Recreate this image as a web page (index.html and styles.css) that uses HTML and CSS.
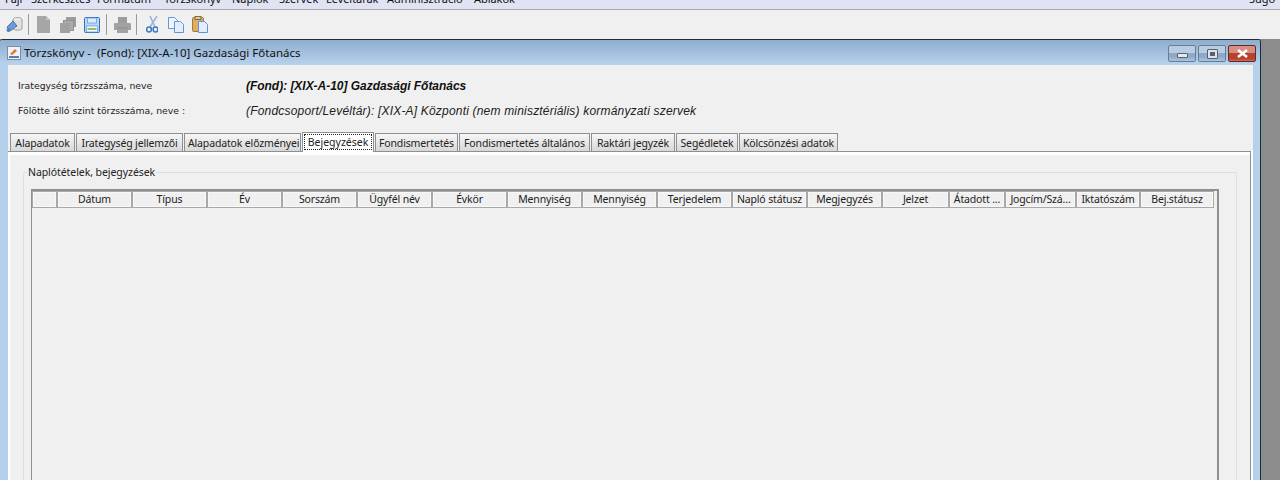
FILE: index.html
```html
<!DOCTYPE html>
<html lang="hu">
<head>
<meta charset="utf-8">
<title>Törzskönyv</title>
<link rel="stylesheet" href="styles.css">
</head>
<body>
<nav class="menubar">
  <span class="m m1">Fájl</span><span class="m m2">Szerkesztés</span><span class="m m3">Formátum</span><span class="m m4">Törzskönyv</span><span class="m m5">Naplók</span><span class="m m6">Szervek</span><span class="m m7">Levéltárak</span><span class="m m8">Adminisztráció</span><span class="m m9">Ablakok</span><span class="m help">Súgó</span>
</nav>
<div class="toolbar">
  <svg class="ic i-search" viewBox="0 0 17 17"><ellipse cx="11.5" cy="4" rx="4.5" ry="2.5" fill="#ececec" stroke="#a0a0a0"/><path d="M7 4v9c0 1.5 9 1.5 9 0V4" fill="#e2e2e2" stroke="#a0a0a0"/><path d="M1 11l6-6 4 5-7 5z" fill="#6f9ad6" stroke="#4473b5"/><circle cx="2.5" cy="14" r="2" fill="#4f80c2"/></svg>
  <i class="sep s1"></i>
  <svg class="ic i-doc" viewBox="0 0 13 17"><path d="M0 0h9l4 4v13H0z" fill="#a6a6a6"/><path d="M9 0l4 4H9z" fill="#c2c2c2"/></svg>
  <svg class="ic i-docs" viewBox="0 0 16 16"><rect x="6" y="0" width="10" height="10" fill="#9c9c9c"/><rect x="3.5" y="3.5" width="10" height="10" fill="#aaa" stroke="#929292"/><rect x="0" y="6" width="10" height="10" fill="#a0a0a0"/></svg>
  <svg class="ic i-save" viewBox="0 0 16 16"><rect x=".5" y=".5" width="15" height="15" rx="1" fill="#bcd6f5" stroke="#2f6fc4"/><rect x="3.5" y="1" width="9" height="5" fill="#dcebfb" stroke="#5f93d6" stroke-width=".7"/><rect x="2.5" y="9" width="11" height="6" fill="#f6f9fd" stroke="#5f93d6" stroke-width=".7"/><rect x="3.5" y="11" width="9" height="2" fill="#8fc070"/></svg>
  <i class="sep s2"></i>
  <svg class="ic i-print" viewBox="0 0 17 16"><path d="M4 0h9v6H4z" fill="#9c9c9c"/><path d="M1 6h15a1 1 0 0 1 1 1v6h-3v3H3v-3H0V7a1 1 0 0 1 1-1z" fill="#a2a2a2"/><path d="M3 11h11" stroke="#8a8a8a"/></svg>
  <i class="sep s3"></i>
  <svg class="ic i-cut" viewBox="0 0 12 17"><path d="M11 0L4 11M4 0l5 11" fill="none" stroke="#9db6d6" stroke-width="1.6"/><circle cx="3" cy="13.5" r="2.4" fill="none" stroke="#3f78c0" stroke-width="1.5"/><circle cx="9.5" cy="13.5" r="2.4" fill="none" stroke="#3f78c0" stroke-width="1.5"/></svg>
  <svg class="ic i-copy" viewBox="0 0 16 16"><path d="M.5.5h6l3 3v8h-9z" fill="#eef5fd" stroke="#6496d6"/><path d="M6.5 4.5h6l3 3v8h-9z" fill="#e2eefb" stroke="#6496d6"/></svg>
  <svg class="ic i-paste" viewBox="0 0 16 17"><rect x=".5" y="1.5" width="11" height="14" rx="1" fill="#dcae66" stroke="#a47a38"/><rect x="3" y=".5" width="6" height="3" fill="#c8c8c8" stroke="#8a6a30"/><path d="M6.5 5.5h6l3 3v8h-9z" fill="#e2eefb" stroke="#6496d6"/></svg>
</div>
<div class="desktop">
  <section class="window">
    <header class="titlebar">
      <svg class="win-icon" viewBox="0 0 14 14"><rect x=".5" y=".5" width="13" height="13" fill="#eef2f8" stroke="#7d8ca0"/><path d="M3 8l5-5 2 2-5 4z" fill="#e2762a"/><path d="M2 10h10v2H2z" fill="#5d7ba8"/></svg>
      <span class="win-title">Törzskönyv -&nbsp; (Fond): [XIX-A-10] Gazdasági Főtanács</span>
      <div class="win-btns">
        <span class="wb"><i class="g-min"></i></span>
        <span class="wb"><i class="g-max"></i></span>
        <span class="wb close"><svg class="g-x" viewBox="0 0 11 9"><path d="M1 1l9 7M10 1L1 8" stroke="#fff" stroke-width="2.6"/></svg></span>
      </div>
    </header>
    <div class="content">
      <div class="info r1"><span class="lbl">Irategység törzsszáma, neve</span><strong class="val">(Fond): [XIX-A-10] Gazdasági Főtanács</strong></div>
      <div class="info r2"><span class="lbl">Fölötte álló szint törzsszáma, neve :</span><em class="val2">(Fondcsoport/Levéltár): [XIX-A] Központi (nem minisztériális) kormányzati szervek</em></div>
      <div class="tabs">
        <span class="tab t1">Alapadatok</span>
        <span class="tab t2">Irategység jellemzői</span>
        <span class="tab t3">Alapadatok előzményei</span>
        <span class="tab t4 active"><b class="focus">Bejegyzések</b></span>
        <span class="tab t5">Fondismertetés</span>
        <span class="tab t6">Fondismertetés általános</span>
        <span class="tab t7">Raktári jegyzék</span>
        <span class="tab t8">Segédletek</span>
        <span class="tab t9">Kölcsönzési adatok</span>
      </div>
      <div class="panel">
        <fieldset class="group">
          <legend>Naplótételek, bejegyzések</legend>
          <div class="table">
            <div class="thead">
              <span class="th w25"></span>
              <span class="th w75">Dátum</span>
              <span class="th w75">Típus</span>
              <span class="th w75">Év</span>
              <span class="th w75">Sorszám</span>
              <span class="th w75">Ügyfél név</span>
              <span class="th w75">Évkör</span>
              <span class="th w75">Mennyiség</span>
              <span class="th w75">Mennyiség</span>
              <span class="th w75">Terjedelem</span>
              <span class="th w75">Napló státusz</span>
              <span class="th w75">Megjegyzés</span>
              <span class="th w67">Jelzet</span>
              <span class="th w56">Átadott ...</span>
              <span class="th w71">Jogcím/Szá...</span>
              <span class="th w64">Iktatószám</span>
              <span class="th w74">Bej.státusz</span>
            </div>
          </div>
        </fieldset>
      </div>
    </div>
  </section>
</div>
</body>
</html>
```
FILE: styles.css
```css
* { box-sizing: border-box; }
html, body { margin: 0; height: 480px; overflow: hidden; }
body {
  display: flex;
  flex-direction: column;
  font-family: "Noto Sans", "DejaVu Sans", sans-serif;
  font-size: 10.5px;
  letter-spacing: -.15px;
  color: #111;
  background: #8c8c8c;
}

/* Menu bar (clipped by the top of the picture) */
.menubar {
  flex: none;
  display: flex;
  height: 10px;
  overflow: hidden;
  background: #dfe3f3;
  border-bottom: 1px solid #a8a8a8;
  align-items: flex-end;
  padding-bottom: 3px;
}
.m { flex: none; line-height: 14px; white-space: nowrap; letter-spacing: -.05px; font-size: 11px; }
.m1 { width: 26px; margin-left: 5px; }
.m2 { width: 66px; }
.m3 { width: 67px; }
.m4 { width: 68px; }
.m5 { width: 47px; }
.m6 { width: 47px; }
.m7 { width: 61px; }
.m8 { width: 87px; }
.m9 { width: 50px; }
.help { margin-left: auto; margin-right: 5px; }

/* Toolbar */
.toolbar {
  flex: none;
  display: flex;
  align-items: center;
  height: 29px;
  background: #f0f0f0;
  padding-left: 6px;
}
.ic { flex: none; display: block; }
.i-search { width: 17px; height: 17px; }
.sep { flex: none; width: 1px; height: 21px; background: #9a9a9a; }
.s1 { margin: 0 8px 0 5px; }
.i-doc { width: 13px; height: 17px; }
.i-docs { width: 16px; height: 16px; margin-left: 10px; }
.i-save { width: 16px; height: 16px; margin-left: 8px; }
.s2 { margin: 0 7px 0 6px; }
.i-print { width: 17px; height: 16px; }
.s3 { margin: 0 9px 0 5px; }
.i-cut { width: 12px; height: 17px; }
.i-copy { width: 16px; height: 16px; margin-left: 10px; }
.i-paste { width: 16px; height: 17px; margin-left: 8px; }

/* Window */
.desktop { flex: 1; min-height: 0; display: flex; }
.window {
  flex: none;
  width: 1261px;
  display: flex;
  flex-direction: column;
  background: #b5d0ea;
  border-top: 1px solid #262b30;
  border-right: 1px solid #10323c;
  border-top-right-radius: 3px;
  border-top-left-radius: 3px;
  overflow: hidden;
}
.titlebar {
  flex: none;
  display: flex;
  align-items: center;
  height: 25px;
  padding-left: 7px;
  background: linear-gradient(#8eaecf, #b7d2ec);
}
.win-icon { width: 14px; height: 14px; flex: none; margin-right: 3px; }
.win-title { font-size: 11.5px; letter-spacing: .02px; white-space: nowrap; color: #111; }
.win-btns { margin-left: auto; align-self: flex-start; display: flex; gap: 2px; margin-right: 4px; margin-top: 5px; }
.wb {
  width: 28px;
  height: 17px;
  display: flex;
  align-items: center;
  justify-content: center;
  border: 1px solid #6c7d92;
  border-radius: 2px;
  background: linear-gradient(#b9cde2 0 50%, #8ea9c6 50% 70%, #a9c4e0);
}
.close { background: linear-gradient(#d88d80 0 45%, #b8432c 45% 85%, #cf6a55); border-color: #5d2d2a; }
.g-min { display: block; width: 11px; height: 5px; margin-top: 4px; background: #e6e8ec; border: 1px solid #56606e; border-radius: 1px; }
.g-max { display: block; width: 11px; height: 10px; background: #dde2ea; border: 1px solid #56606e; border-radius: 1px; box-shadow: inset 0 0 0 2px #dde2ea, inset 0 0 0 4px #56606e; }
.g-x { width: 11px; height: 9px; }

.content {
  flex: 1;
  min-height: 0;
  margin: 0 7px 0 8px;
  background: #f0f0f0;
  display: flex;
  flex-direction: column;
}
.info { flex: none; display: flex; align-items: center; height: 25px; padding-left: 10px; }
.r1 { margin-top: 8px; }
.lbl { width: 228px; flex: none; font-family: "DejaVu Sans", sans-serif; font-size: 9.3px; letter-spacing: 0; color: #222; white-space: nowrap; }
.val { font: italic bold 12px "Liberation Sans", Arial, sans-serif; letter-spacing: -.03px; white-space: nowrap; }
.val2 { font: italic 12px "Liberation Sans", Arial, sans-serif; letter-spacing: .19px; white-space: nowrap; color: #222; }

/* Tabs */
.tabs { flex: none; display: flex; margin-top: 9px; padding-left: 2px; height: 19px; align-items: flex-end; }
.tab {
  flex: none;
  height: 18px;
  margin-right: 1px;
  display: flex;
  align-items: center;
  justify-content: center;
  overflow: hidden;
  white-space: nowrap;
  border: 1px solid #8c8f94;
  border-bottom: 0;
  background: linear-gradient(#f6f6f6, #d8d8d8);
  color: #222;
}
.t1 { width: 65px; }
.t2 { width: 107px; }
.t3 { width: 117px; justify-content: flex-start; padding-left: 3px; }
.t4 { width: 72px; }
.t5 { width: 83px; }
.t6 { width: 131px; }
.t7 { width: 84px; }
.t8 { width: 62px; }
.t9 { width: 99px; margin-right: 0; }
.active { height: 20px; background: #fff; padding: 1px; position: relative; z-index: 1; margin-bottom: -1px; align-items: flex-start; }
.focus { display: block; width: 100%; height: 16px; line-height: 14px; font-weight: 400; letter-spacing: 0; text-align: center; border: 1px dotted #222; }

/* Panel with group box */
.panel {
  flex: 1;
  min-height: 0;
  margin-right: 2px;
  border-top: 1px solid #8c8f94;
  border-right: 1px solid #8c8f94;
  box-shadow: inset 0 3px 0 #fff, inset 2px 0 0 #fff, 2px 0 0 #fff;
  padding: 13px 13px 0 15px;
}
.group {
  margin: 0;
  height: 400px;
  padding: 9px 17px 0 7px;
  border: 1px solid #d6e0e8;
  border-radius: 2px;
  min-width: 0;
}
.group legend { margin-left: -4px; padding: 0 1px; line-height: 15px; letter-spacing: -.07px; color: #222; }
.table { height: 400px; border: 1px solid #8c9094; border-width: 2px 2px 0 1px; }
.thead { display: flex; height: 17px; }
.th {
  flex: none;
  height: 17px;
  line-height: 15px;
  text-align: center;
  white-space: nowrap;
  overflow: hidden;
  border: 1px solid #a8a8a8;
  box-shadow: inset 0 0 0 1px #f8f8f8;
  color: #222;
}
.w25 { width: 25px; }
.w75 { width: 75px; }
.w67 { width: 67px; }
.w56 { width: 56px; }
.w71 { width: 71px; }
.w64 { width: 64px; }
.w74 { width: 74px; }
```
